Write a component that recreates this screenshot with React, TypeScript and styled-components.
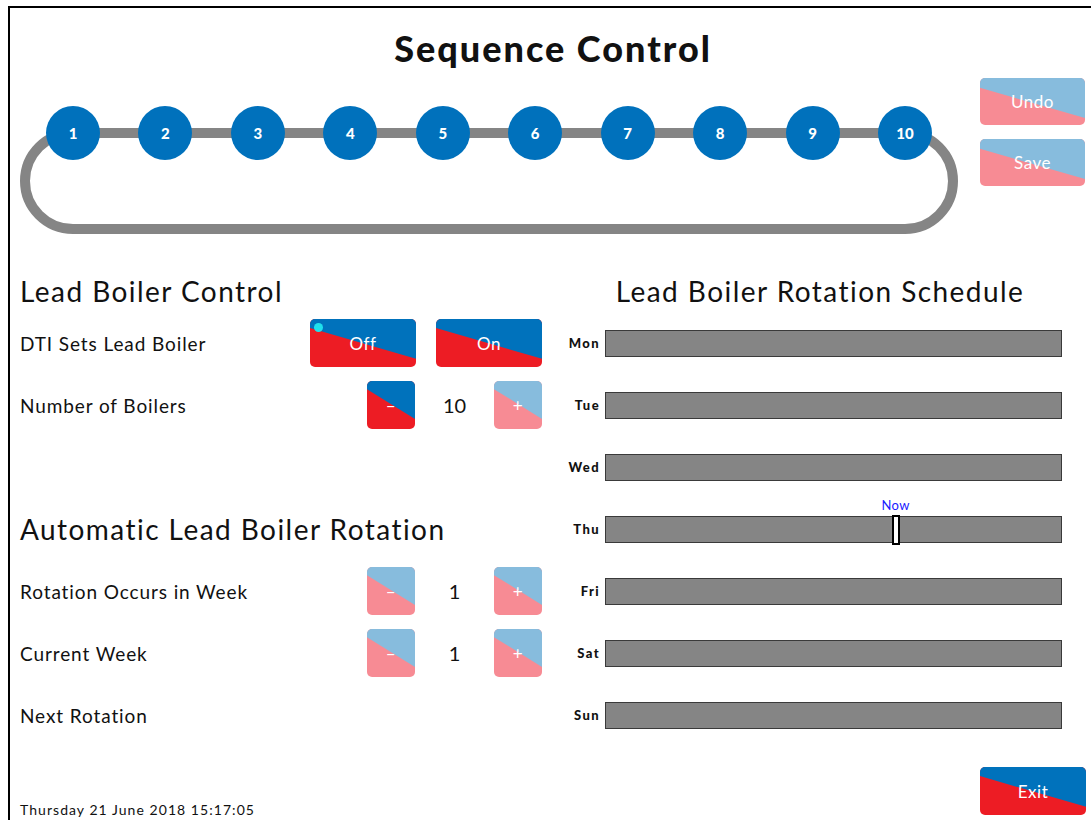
import React from 'react';
import styled, { createGlobalStyle, css } from 'styled-components';

const GlobalStyle = createGlobalStyle`
  html, body {
    margin: 0;
    padding: 0;
    background: #ffffff;
    overflow: hidden;
  }
  body {
    font-family: 'Lato', 'DejaVu Sans', sans-serif;
    color: #111;
  }
`;

const COLORS = {
  dark: { top: '#0072bc', bottom: '#ed1c24' },
  light: { top: '#87bcdd', bottom: '#f78b94' },
};

const Frame = styled.div`
  margin: 6px 0 0 8px;
  width: 1090px;
  height: 830px;
  box-sizing: border-box;
  border: 2px solid #000;
  padding: 0 10px;
  display: flex;
  flex-direction: column;
`;

const Title = styled.h1`
  margin: 20px 0 0;
  height: 40px;
  line-height: 40px;
  text-align: center;
  font-size: 36px;
  font-weight: 900;
  letter-spacing: 2px;
`;

const TopRow = styled.div`
  display: flex;
  align-items: flex-start;
  margin-top: 10px;
`;

const Track = styled.div`
  position: relative;
  margin-top: 28px;
  width: 938px;
  height: 128px;
`;

const TrackLine = styled.svg`
  position: absolute;
  inset: 0;
`;

const Nodes = styled.div`
  position: relative;
  display: flex;
  gap: 38.44px;
  padding-left: 26px;
`;

const Node = styled.div`
  width: 54px;
  height: 54px;
  border-radius: 50%;
  background: #0071bc;
  color: #fff;
  font-weight: 900;
  font-size: 15px;
  display: flex;
  align-items: center;
  justify-content: center;
`;

const SideButtons = styled.div`
  margin-left: 22px;
  display: flex;
  flex-direction: column;
  gap: 14px;
`;

const SplitButton = styled.button<{ $tone: 'dark' | 'light'; $w: number; $h: number; $from: number; $to: number }>`
  position: relative;
  width: ${(p) => p.$w}px;
  height: ${(p) => p.$h}px;
  border: none;
  border-radius: 5px;
  padding: 0;
  overflow: hidden;
  cursor: pointer;
  font-family: inherit;
  font-size: 17px;
  letter-spacing: 0.5px;
  color: #fff;
  background: ${(p) => COLORS[p.$tone].bottom};
  display: flex;
  align-items: center;
  justify-content: center;

  &::before {
    content: '';
    position: absolute;
    inset: 0;
    background: ${(p) => COLORS[p.$tone].top};
    clip-path: polygon(0 0, 100% 0, 100% ${(p) => p.$to}%, 0 ${(p) => p.$from}%);
  }

  span {
    position: relative;
  }
`;

const Dot = styled.i`
  position: absolute;
  left: 4px;
  top: 4px;
  width: 9px;
  height: 9px;
  border-radius: 50%;
  background: #1fe0ec;
`;

const Panels = styled.div`
  display: grid;
  grid-template-columns: 522px 1fr;
  gap: 18px;
  margin-top: 36px;
`;

const Column = styled.div`
  display: flex;
  flex-direction: column;
`;

const Heading = styled.h2<{ $center?: boolean; $tall?: boolean }>`
  margin: 0;
  height: ${(p) => (p.$tall ? 62 : 42)}px;
  line-height: ${(p) => (p.$tall ? 62 : 42)}px;
  font-size: 28px;
  font-weight: 400;
  letter-spacing: 1.45px;
  white-space: nowrap;
  ${(p) =>
    p.$center &&
    css`
      text-align: center;
      padding-right: 6px;
    `}
`;

const Row = styled.div`
  height: 62px;
  display: flex;
  align-items: center;
`;

const Label = styled.div`
  flex: 1;
  font-size: 19px;
  letter-spacing: 0.9px;
`;

const Controls = styled.div`
  display: flex;
  align-items: center;
  gap: 20px;
`;

const Value = styled.div`
  width: 79px;
  text-align: center;
  font-size: 20px;
`;

const Stepper = styled.div`
  display: flex;
  align-items: center;
`;

const DayRow = styled.div`
  height: 62px;
  display: flex;
  align-items: center;
  padding-right: 24px;
`;

const Day = styled.div`
  width: 40px;
  text-align: right;
  font-size: 13px;
  font-weight: 900;
  letter-spacing: 1.4px;
  margin-right: 5px;
`;

const Bar = styled.div`
  position: relative;
  flex: 1;
  height: 27px;
  box-sizing: border-box;
  background: #858585;
  border: 1px solid #3a3a3a;
`;

const NowMarker = styled.div`
  position: absolute;
  top: -2px;
  width: 8px;
  height: 30px;
  box-sizing: border-box;
  background: #fff;
  border: 2px solid #000;
`;

const NowLabel = styled.span`
  position: absolute;
  bottom: 30px;
  left: 50%;
  transform: translateX(-50%);
  color: #1a1aff;
  font-size: 13px;
  letter-spacing: 0.5px;
`;

const Footer = styled.div`
  display: flex;
  align-items: flex-end;
  justify-content: space-between;
  margin-top: 21px;
`;

const DateText = styled.div`
  font-size: 14px;
  margin-bottom: -3px;
  letter-spacing: 1.05px;
`;

const days = ['Mon', 'Tue', 'Wed', 'Thu', 'Fri', 'Sat', 'Sun'];

function Square({ tone, sign }: { tone: 'dark' | 'light'; sign: string }) {
  return (
    <SplitButton $tone={tone} $w={48} $h={48} $from={17} $to={79}>
      <span>{sign}</span>
    </SplitButton>
  );
}

export default function App() {
  return (
    <>
      <GlobalStyle />
      <Frame>
        <Title>Sequence Control</Title>
        <TopRow>
          <Track>
            <TrackLine width="938" height="128" viewBox="0 0 938 128">
              <rect x="5" y="27" width="928" height="96" rx="48" ry="48" fill="none" stroke="#858585" strokeWidth="10" />
            </TrackLine>
            <Nodes>
              {Array.from({ length: 10 }, (_, i) => (
                <Node key={i}>{i + 1}</Node>
              ))}
            </Nodes>
          </Track>
          <SideButtons>
            <SplitButton $tone="light" $w={105} $h={47} $from={21} $to={85}>
              <span>Undo</span>
            </SplitButton>
            <SplitButton $tone="light" $w={105} $h={47} $from={21} $to={85}>
              <span>Save</span>
            </SplitButton>
          </SideButtons>
        </TopRow>

        <Panels>
          <Column>
            <Heading>Lead Boiler Control</Heading>
            <Row>
              <Label>DTI Sets Lead Boiler</Label>
              <Controls>
                <SplitButton $tone="dark" $w={106} $h={48} $from={19} $to={83}>
                  <Dot />
                  <span>Off</span>
                </SplitButton>
                <SplitButton $tone="dark" $w={106} $h={48} $from={19} $to={83}>
                  <span>On</span>
                </SplitButton>
              </Controls>
            </Row>
            <Row>
              <Label>Number of Boilers</Label>
              <Stepper>
                <Square tone="dark" sign="–" />
                <Value>10</Value>
                <Square tone="light" sign="+" />
              </Stepper>
            </Row>
            <Row />
            <Heading $tall>Automatic Lead Boiler Rotation</Heading>
            <Row>
              <Label>Rotation Occurs in Week</Label>
              <Stepper>
                <Square tone="light" sign="–" />
                <Value>1</Value>
                <Square tone="light" sign="+" />
              </Stepper>
            </Row>
            <Row>
              <Label>Current Week</Label>
              <Stepper>
                <Square tone="light" sign="–" />
                <Value>1</Value>
                <Square tone="light" sign="+" />
              </Stepper>
            </Row>
            <Row>
              <Label>Next Rotation</Label>
            </Row>
          </Column>

          <Column>
            <Heading $center>Lead Boiler Rotation Schedule</Heading>
            {days.map((d) => (
              <DayRow key={d}>
                <Day>{d}</Day>
                <Bar>
                  {d === 'Thu' && (
                    <NowMarker style={{ left: '62.8%' }}>
                      <NowLabel>Now</NowLabel>
                    </NowMarker>
                  )}
                </Bar>
              </DayRow>
            ))}
          </Column>
        </Panels>

        <Footer>
          <DateText>Thursday 21 June 2018 15:17:05</DateText>
          <SplitButton $tone="dark" $w={106} $h={48} $from={19} $to={83}>
            <span>Exit</span>
          </SplitButton>
        </Footer>
      </Frame>
    </>
  );
}
